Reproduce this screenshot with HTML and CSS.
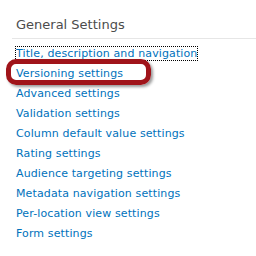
FILE: index.html
```html
<!DOCTYPE html>
<html lang="en">
<head>
  <meta charset="UTF-8" />
  <title>General Settings</title>
  <link rel="stylesheet" href="styles.css">
</head>
<body>

<div class="section">
  <h2>General Settings</h2>
  <ul class="links">
    <li><a href="#" class="focused">Title, description and navigation</a></li>
    <li class="marked"><a href="#">Versioning settings</a></li>
    <li><a href="#">Advanced settings</a></li>
    <li><a href="#">Validation settings</a></li>
    <li><a href="#">Column default value settings</a></li>
    <li><a href="#">Rating settings</a></li>
    <li><a href="#">Audience targeting settings</a></li>
    <li><a href="#">Metadata navigation settings</a></li>
    <li><a href="#">Per-location view settings</a></li>
    <li><a href="#">Form settings</a></li>
  </ul>
</div>

</body>
</html>
```

FILE: styles.css
```css
body {
  margin: 0;
  background: #fff;
  font-family: "DejaVu Sans", Verdana, sans-serif;
}

.section {
  padding: 17px 0 0 12px;
}

h2 {
  margin: 0;
  padding: 0 0 6px 4px;
  font-size: 13px;
  font-weight: normal;
  color: #4c4c4c;
  border-bottom: 1px solid #e6e6e6;
}

.links {
  list-style: none;
  margin: 0;
  padding: 6px 0 0 4px;
}

.links li {
  height: 20px;
  line-height: 14px;
  position: relative;
}

.links a {
  font-size: 11px;
  letter-spacing: 0.12px;
  color: #0072bc;
  text-decoration: none;
}

.focused {
  outline: 1px dotted #000;
}

.marked::after {
  content: "";
  position: absolute;
  left: -10px;
  top: -6px;
  width: 135px;
  height: 16px;
  border: 5px solid #a0141a;
  border-radius: 10px;
  box-shadow: 2px 2px 3px rgba(0, 0, 0, 0.4);
}
```
